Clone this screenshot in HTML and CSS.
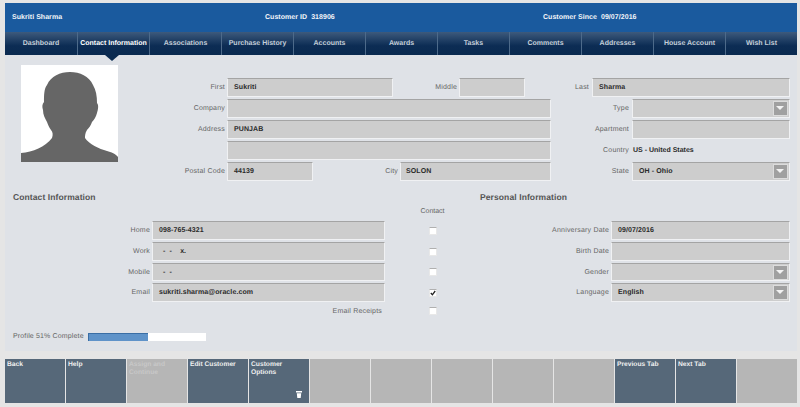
FILE: index.html
```html
<!DOCTYPE html>
<html lang="en">
<head>
    <meta charset="UTF-8">
    <title>Customer</title>
    <link rel="stylesheet" href="styles.css">
</head>
<body>
    <div class="app">
        <div class="cust-head">
            <div class="cust-name">Sukriti Sharma</div>
            <div class="cust-id">Customer ID&nbsp; 318906</div>
            <div class="cust-since">Customer Since&nbsp; 09/07/2016</div>
        </div>

        <div class="tabs">
            <div class="tab">Dashboard</div>
            <div class="tab active">Contact Information</div>
            <div class="tab">Associations</div>
            <div class="tab">Purchase History</div>
            <div class="tab">Accounts</div>
            <div class="tab">Awards</div>
            <div class="tab">Tasks</div>
            <div class="tab">Comments</div>
            <div class="tab">Addresses</div>
            <div class="tab">House Account</div>
            <div class="tab">Wish List</div>
        </div>

        <div class="content">
            <div class="top">
                <div class="photo">
                    <svg viewBox="0 0 97 97" width="97" height="97">
                        <path fill="#666" d="M0 97V88C12 87 24 82 31 73C32 70 32 67 30 65C28 62 27 60 26 57C24 53 22 50 22 45C21 42 21 39 23 37C23 30 23 24 26 20C30 11 39 7 49 7C59 7 68 11 72 20C75 25 76 31 76 38C78 40 77 45 76 48C75 52 73 55 71 57C70 60 68 63 66 65C64 68 64 71 64 73C68 79 78 84 86 86C90 87 95 89 97 92V97Z"/>
                    </svg>
                </div>
                <div class="top-form">
                    <label class="lbl">First</label>
                    <div class="field">Sukriti</div>
                    <label class="lbl">Middle</label>
                    <div class="field"></div>
                    <label class="lbl span-2">Last</label>
                    <div class="field span-2">Sharma</div>

                    <label class="lbl">Company</label>
                    <div class="field span-4"></div>
                    <label class="lbl span-2">Type</label>
                    <div class="field select"><span class="arrow"></span></div>

                    <label class="lbl">Address</label>
                    <div class="field span-4">PUNJAB</div>
                    <label class="lbl span-2">Apartment</label>
                    <div class="field"></div>

                    <div class="spacer"></div>
                    <div class="field span-4"></div>
                    <label class="lbl span-2">Country</label>
                    <div class="plain">US - United States</div>

                    <label class="lbl">Postal Code</label>
                    <div class="city-row span-4">
                        <div class="field postal">44139</div>
                        <label class="lbl city-lbl">City</label>
                        <div class="field city">SOLON</div>
                    </div>
                    <label class="lbl span-2">State</label>
                    <div class="field select">OH - Ohio<span class="arrow"></span></div>
                </div>
            </div>

            <div class="lower">
                <h2 class="title title-left">Contact Information</h2>
                <h2 class="title title-right">Personal Information</h2>

                <div class="contact-head">Contact</div>

                <label class="lbl row-first">Home</label>
                <div class="field">098-765-4321</div>
                <div class="check-cell"><span class="check"></span></div>
                <label class="lbl">Anniversary Date</label>
                <div class="field">09/07/2016</div>

                <label class="lbl">Work</label>
                <div class="field"><span class="mask">-&nbsp;&nbsp;-&nbsp;&nbsp;&nbsp; x.</span></div>
                <div class="check-cell"><span class="check"></span></div>
                <label class="lbl">Birth Date</label>
                <div class="field"></div>

                <label class="lbl">Mobile</label>
                <div class="field"><span class="mask">-&nbsp;&nbsp;-</span></div>
                <div class="check-cell"><span class="check"></span></div>
                <label class="lbl">Gender</label>
                <div class="field select"><span class="arrow"></span></div>

                <label class="lbl">Email</label>
                <div class="field">sukriti.sharma@oracle.com</div>
                <div class="check-cell"><span class="check">
                    <svg viewBox="0 0 6 6" width="6" height="6"><path d="M.8 3L2.4 4.8L5.2 1" fill="none" stroke="#222" stroke-width="1.3"/></svg>
                </span></div>
                <label class="lbl">Language</label>
                <div class="field select">English<span class="arrow"></span></div>

                <label class="lbl lbl-receipts span-2">Email Receipts</label>
                <div class="check-cell"><span class="check"></span></div>
            </div>

            <div class="profile">
                <span class="profile-text">Profile 51% Complete</span>
                <div class="bar"><div class="bar-fill" style="width: 51%"></div></div>
            </div>
        </div>

        <div class="actions">
            <div class="btn">Back</div>
            <div class="btn">Help</div>
            <div class="btn off">Assign and Continue</div>
            <div class="btn">Edit Customer</div>
            <div class="btn">Customer Options
                <svg class="btn-icon" viewBox="0 0 6 7" width="6" height="7"><path fill="#fff" d="M0 0H6V1.4H0ZM.8 2.2H5.2L4.7 7H1.3Z"/></svg>
            </div>
            <div class="btn off"></div>
            <div class="btn off"></div>
            <div class="btn off"></div>
            <div class="btn off"></div>
            <div class="btn off"></div>
            <div class="btn">Previous Tab</div>
            <div class="btn">Next Tab</div>
            <div class="btn off"></div>
        </div>
    </div>
</body>
</html>
```

FILE: styles.css
```css
* {
    margin: 0;
    padding: 0;
    box-sizing: border-box;
}

body {
    width: 800px;
    height: 407px;
    overflow: hidden;
    background-color: #e5e5e5;
    font-family: "Liberation Sans", Arial, sans-serif;
    font-size: 7px;
    text-rendering: geometricPrecision;
    color: #222;
}

.app {
    width: 792px;
    margin: 3px 0 0 5px;
}

/* customer header */
.cust-head {
    height: 29px;
    background-color: #1a5a9e;
    color: #f2f5f9;
    font-weight: bold;
    letter-spacing: 0.05px;
    display: grid;
    grid-template-columns: 260px 260px 1fr;
    align-items: center;
}

.cust-name {
    padding-left: 7px;
}

.cust-since {
    padding-left: 18px;
}

/* tabs */
.tabs {
    height: 23px;
    display: grid;
    grid-template-columns: repeat(11, 72px);
    background: linear-gradient(#3d5a7c, #0c2c54 60%, #0a2a50);
}

.tab {
    position: relative;
    display: flex;
    justify-content: center;
    align-items: center;
    white-space: nowrap;
    color: #c3ced9;
    font-weight: bold;
    border-left: 1px solid #4d6a8a;
}

.tab:first-child {
    border-left: none;
}

.tab.active {
    color: #fff;
}

.tab.active::after {
    content: "";
    position: absolute;
    left: 27px;
    top: 23px;
    border-left: 7px solid transparent;
    border-right: 7px solid transparent;
    border-top: 6px solid #0a2a50;
}

/* main panel */
.content {
    height: 296px;
    background-color: #dfe2e7;
    color: #555;
}

.top {
    display: flex;
    padding: 10px 0 0 16px;
}

.photo {
    width: 97px;
    height: 97px;
    background-color: #fff;
    flex-shrink: 0;
}

.photo svg {
    display: block;
}

.top-form {
    margin-top: 13px;
    display: grid;
    grid-template-columns: 109px 166px 66px 66px 26px 41px 40px 158px;
    grid-auto-rows: 19px;
    row-gap: 2px;
}

.lbl {
    display: flex;
    justify-content: flex-end;
    align-items: center;
    padding-right: 2px;
    color: #666;
    letter-spacing: 0.2px;
    white-space: nowrap;
}

.top-form .span-2.lbl {
    padding-right: 3px;
}

.span-2 {
    grid-column: span 2;
}

.span-4 {
    grid-column: span 4;
}

.field {
    position: relative;
    display: flex;
    align-items: center;
    padding-left: 6px;
    background-color: #cdcdcd;
    border: 1px solid #f0f1f3;
    border-top: 1px solid #a4a4a4;
    color: #2a2a2a;
    font-weight: bold;
    letter-spacing: 0.1px;
    white-space: nowrap;
}

.plain {
    display: flex;
    align-items: center;
    padding-left: 1px;
    color: #2a2a2a;
    font-weight: bold;
}

.city-row {
    display: flex;
}

.postal {
    width: 86px;
}

.city-lbl {
    flex: 1;
}

.city {
    width: 151px;
    padding-left: 5px;
}

.select .arrow {
    position: absolute;
    right: 1px;
    top: 1px;
    width: 15px;
    height: 15px;
    background-color: #a0a0a0;
    border: 1px solid #dcdcdc;
}

.select .arrow::after {
    content: "";
    position: absolute;
    left: 2px;
    top: 4px;
    border-left: 4.5px solid transparent;
    border-right: 4.5px solid transparent;
    border-top: 4px solid #f2f2f2;
}

/* contact + personal */
.lower {
    margin: 0 0 0 8px;
    display: grid;
    grid-template-columns: 139px 233px 95px 131px 179px;
    grid-template-rows: 21px 15px 19px 19px 18px 19px 14px;
    row-gap: 2px;
}

.title {
    font-size: 8.5px;
    font-weight: bold;
    color: #555;
    align-self: end;
    line-height: 10px;
    letter-spacing: 0.1px;
    white-space: nowrap;
}

.title-left {
    grid-column: 1 / 3;
}

.title-right {
    grid-column: 4 / 6;
}

.contact-head {
    grid-column: 3;
    align-self: center;
    text-align: center;
    color: #666;
}

.row-first {
    grid-column: 1;
}

.check-cell {
    display: flex;
    justify-content: center;
    align-items: center;
}

.check {
    width: 8px;
    height: 8px;
    background-color: #fff;
    border: 1px solid #e8e8e8;
    border-top-color: #b0b0b0;
    display: flex;
    justify-content: center;
    align-items: center;
}

.check svg {
    flex-shrink: 0;
}

.lbl-receipts {
    padding-right: 3px;
}

.mask {
    padding-left: 4px;
}

/* profile progress */
.profile {
    display: flex;
    align-items: center;
    margin: 15px 0 0 8px;
    color: #666;
    line-height: 8px;
    letter-spacing: 0.15px;
}

.profile-text {
    width: 75px;
    white-space: nowrap;
}

.bar {
    width: 118px;
    height: 8px;
    background-color: #fff;
}

.bar-fill {
    height: 100%;
    background-color: #5f93c9;
    border-top: 1px solid #3a6ea5;
    border-left: 1px solid #3a6ea5;
}

/* bottom buttons */
.actions {
    margin-top: 8px;
    display: grid;
    grid-template-columns: repeat(13, 60px);
    column-gap: 1px;
    height: 44px;
}

.btn {
    position: relative;
    background-color: #566879;
    color: #f0f0f0;
    font-size: 6.7px;
    font-weight: bold;
    padding: 2px 2px;
    line-height: 7.5px;
}

.btn.off {
    background-color: #b6b6b6;
    color: #c8c8c8;
}

.btn-icon {
    position: absolute;
    right: 7px;
    bottom: 5px;
}
```
